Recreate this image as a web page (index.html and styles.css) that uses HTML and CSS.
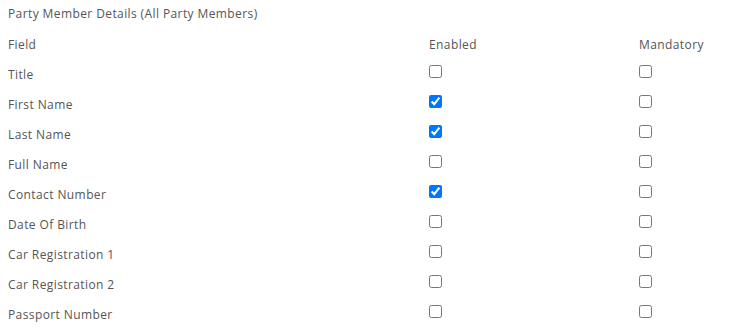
FILE: index.html
```html
<!DOCTYPE html>
<html>
<head>
<meta charset="utf-8">
<link rel="stylesheet" href="styles.css">
</head>
<body>
<div class="panel">
  <div class="heading">Party Member Details (All Party Members)</div>
  <div class="grid">
    <div class="cell head">Field</div>
    <div class="cell head">Enabled</div>
    <div class="cell head">Mandatory</div>

    <div class="cell">Title</div>
    <div class="cell"><input type="checkbox"></div>
    <div class="cell"><input type="checkbox"></div>

    <div class="cell">First Name</div>
    <div class="cell"><input type="checkbox" checked></div>
    <div class="cell"><input type="checkbox"></div>

    <div class="cell">Last Name</div>
    <div class="cell"><input type="checkbox" checked></div>
    <div class="cell"><input type="checkbox"></div>

    <div class="cell">Full Name</div>
    <div class="cell"><input type="checkbox"></div>
    <div class="cell"><input type="checkbox"></div>

    <div class="cell">Contact Number</div>
    <div class="cell"><input type="checkbox" checked></div>
    <div class="cell"><input type="checkbox"></div>

    <div class="cell">Date Of Birth</div>
    <div class="cell"><input type="checkbox"></div>
    <div class="cell"><input type="checkbox"></div>

    <div class="cell">Car Registration 1</div>
    <div class="cell"><input type="checkbox"></div>
    <div class="cell"><input type="checkbox"></div>

    <div class="cell">Car Registration 2</div>
    <div class="cell"><input type="checkbox"></div>
    <div class="cell"><input type="checkbox"></div>

    <div class="cell">Passport Number</div>
    <div class="cell"><input type="checkbox"></div>
    <div class="cell"><input type="checkbox"></div>
  </div>
</div>
</body>
</html>
```
FILE: styles.css
```css
body {
  margin: 0;
  background: #fff;
  font-family: "Open Sans", "Liberation Sans", sans-serif;
  font-size: 12px;
  letter-spacing: 0.4px;
  color: #555;
}

.panel {
  padding: 4px 8px 0 8px;
}

.heading {
  height: 20px;
  line-height: 20px;
  margin-bottom: 5px;
}

.grid {
  display: grid;
  grid-template-columns: 421px 210px 1fr;
  grid-auto-rows: 30px;
}

.cell {
  display: flex;
  align-items: center;
}

.cell input {
  margin: 0 0 5px 0;
  width: 13px;
  height: 13px;
}
```
